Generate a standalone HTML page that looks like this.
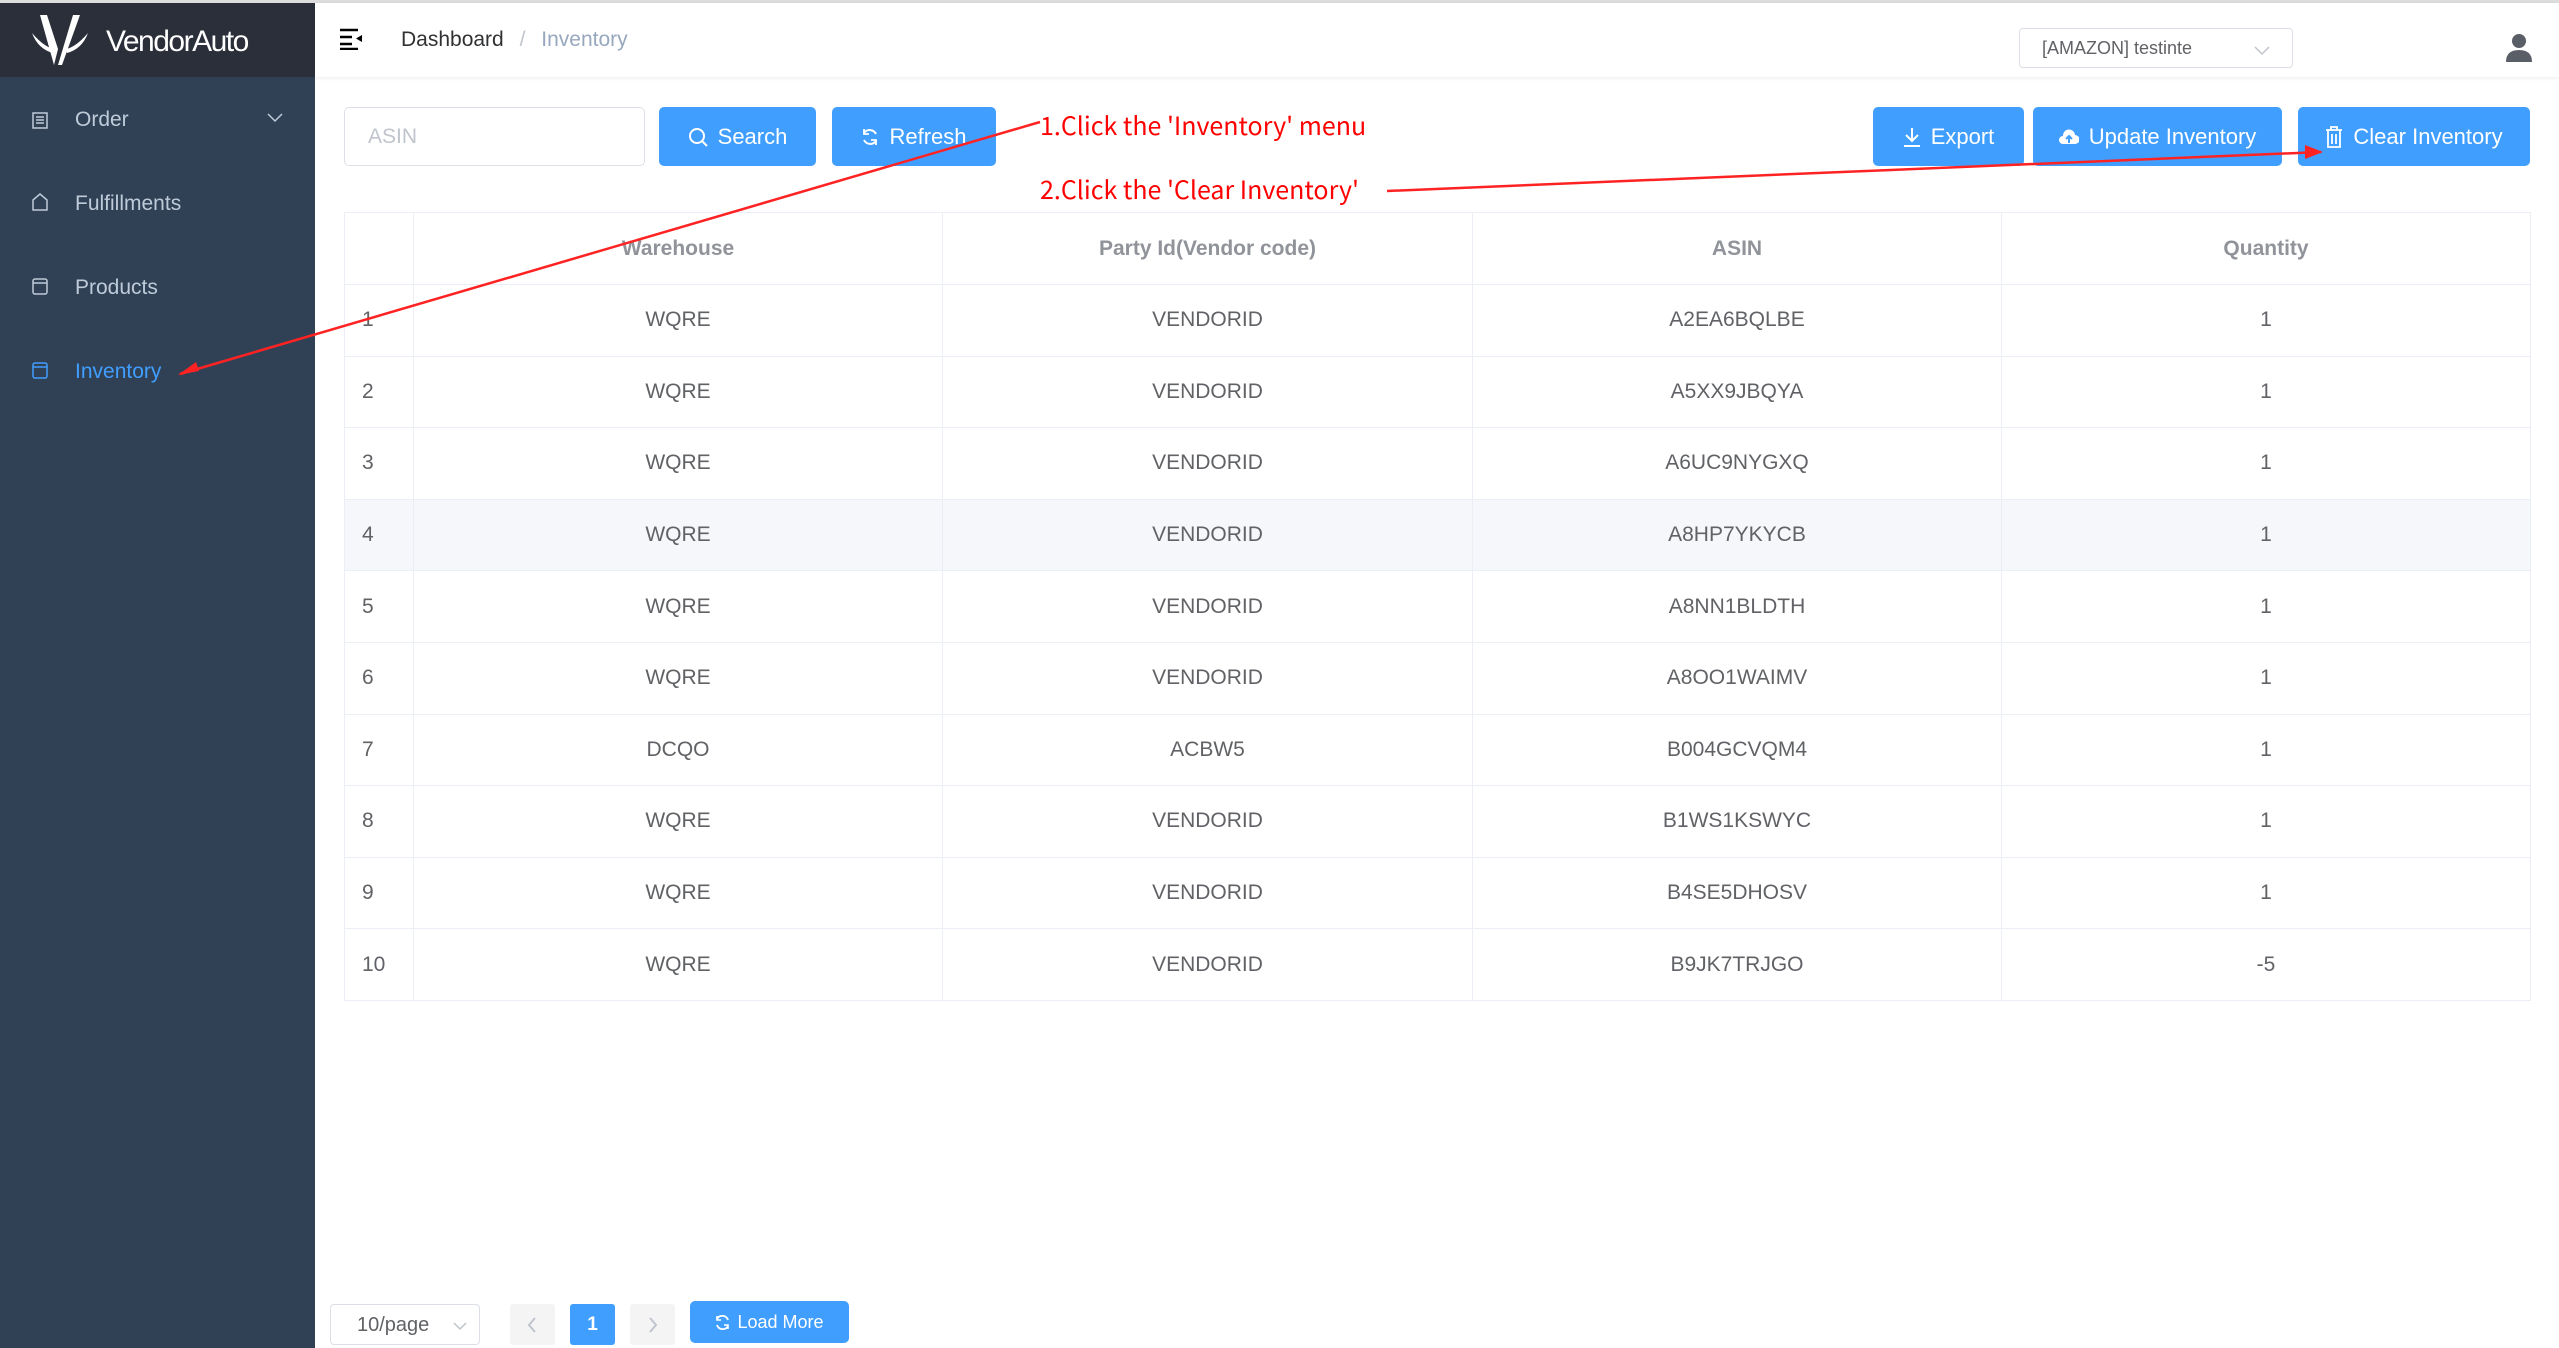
<!DOCTYPE html>
<html><head><meta charset="utf-8"><style>
*{box-sizing:border-box;margin:0;padding:0}
body{width:2559px;height:1348px;overflow:hidden;font-family:"Liberation Sans",sans-serif;background:#fff;position:relative}
.topline{position:absolute;left:0;top:0;width:2559px;height:3px;background:#ddd}
.logo{position:absolute;left:0;top:3px;width:315px;height:74px;background:#2b2f3a;color:#fff}
.side{position:absolute;left:0;top:77px;width:315px;height:1271px;background:#304156}
.mi{position:absolute;left:75px;font-size:21px;color:#bfcbd9}
.ic{position:absolute;left:31px;width:18px;height:18px}
.hdr{position:absolute;left:315px;top:3px;width:2244px;height:74px;background:#fff;box-shadow:0 1px 4px rgba(0,21,41,.08)}
.btn{position:absolute;top:107px;height:59px;background:#409eff;border-radius:5px;color:#fff;font-size:22px;display:flex;align-items:center;justify-content:center;gap:10px}
table{position:absolute;left:344px;top:212px;width:2186px;border-collapse:collapse;table-layout:fixed;font-size:21px;color:#606266;border-top:1px solid #ebeef5;border-left:1px solid #ebeef5}
td,th{border-bottom:1px solid #ebeef5;border-right:1px solid #ebeef5;text-align:center;height:71.6px}
th{color:#909399;font-weight:bold;height:72px}
tr td:first-child,tr th:first-child{text-align:left;padding-left:17px}
.ann{position:absolute;left:1040px;color:#f00;font-size:25px;font-family:"Noto Sans CJK SC",sans-serif}
</style></head><body>
<div class="topline"></div>
<div class="logo">
<svg style="position:absolute;left:30px;top:10px" width="60" height="56" viewBox="0 0 60 56"><path d="M10 2 L17 2 L28 36 L24 52 Z M43 2 L50 2 L32 52 L28 52 Z" fill="#fff"/><path d="M2 20 Q14 34 24 36 L23 40 Q8 36 2 20Z M58 20 Q46 34 36 36 L37 40 Q52 36 58 20Z" fill="#fff"/></svg>
<div style="position:absolute;left:106px;top:22px;font-size:30px;letter-spacing:-1.5px">VendorAuto</div></div>
<div class="side">
<svg class="ic" style="top:34px" viewBox="0 0 18 18"><rect x="2" y="2" width="14" height="15" fill="none" stroke="#bfcbd9" stroke-width="1.5"/><path d="M5 6h8M5 9h8M5 12h8" stroke="#bfcbd9" stroke-width="1.5"/></svg>
<div class="mi" style="top:31px">Order</div>
<svg style="position:absolute;left:267px;top:36px" width="16" height="10"><path d="M1 1 L8 8 L15 1" fill="none" stroke="#bfcbd9" stroke-width="1.5"/></svg>
<svg class="ic" style="top:116px" viewBox="0 0 18 18"><path d="M2 17V7L9 1L16 7V17Z" fill="none" stroke="#bfcbd9" stroke-width="1.5"/></svg>
<div class="mi" style="top:115px">Fulfillments</div>
<svg class="ic" style="top:200px" viewBox="0 0 18 18"><rect x="2" y="2" width="14" height="15" rx="2" fill="none" stroke="#bfcbd9" stroke-width="1.5"/><path d="M2 6h14" stroke="#bfcbd9" stroke-width="1.5"/></svg>
<div class="mi" style="top:199px">Products</div>
<svg class="ic" style="top:284px" viewBox="0 0 18 18"><rect x="2" y="2" width="14" height="15" rx="2" fill="none" stroke="#409eff" stroke-width="1.5"/><path d="M2 6h14" stroke="#409eff" stroke-width="1.5"/></svg>
<div class="mi" style="top:283px;color:#409eff">Inventory</div>
</div>
<div class="hdr">
<svg style="position:absolute;left:25px;top:25px" width="24" height="22"><path d="M0 2h18M0 9h12M0 16h12M0 21h18" stroke="#000" stroke-width="2.5"/><path d="M22 7 L16 10.5 L22 14Z" fill="#000"/></svg>
<div style="position:absolute;left:86px;top:25px;font-size:21px;color:#303133">Dashboard <span style="color:#c0c4cc;margin:0 10px">/</span> <span style="color:#97a8be">Inventory</span></div>
<div style="position:absolute;left:1704px;top:25px;width:274px;height:40px;border:1px solid #dcdfe6;border-radius:4px;font-size:18px;color:#606266;padding:9px 22px">[AMAZON] testinte
<svg style="position:absolute;right:22px;top:17px" width="16" height="10"><path d="M1 1 L8 8 L15 1" fill="none" stroke="#c0c4cc" stroke-width="1.5"/></svg></div>
<svg style="position:absolute;left:2190px;top:30px" width="28" height="30"><circle cx="14" cy="8" r="7" fill="#5a5e66"/><path d="M1 29 Q1 17 14 17 Q27 17 27 29Z" fill="#5a5e66"/></svg>
</div>
<div style="position:absolute;left:344px;top:107px;width:301px;height:59px;border:1px solid #dcdfe6;border-radius:5px;font-size:21px;color:#c0c4cc;padding:17px 23px">ASIN</div>
<div class="btn" style="left:659px;width:157px"><svg width="20" height="20"><circle cx="9" cy="9" r="7" fill="none" stroke="#fff" stroke-width="2"/><path d="M14 14l5 5" stroke="#fff" stroke-width="2"/></svg>Search</div>
<div class="btn" style="left:832px;width:164px"><svg width="18" height="18"><path d="M15 6A7 7 0 0 0 3 5M3 12A7 7 0 0 0 15 13" fill="none" stroke="#fff" stroke-width="2"/><path d="M3 1v5h5M15 17v-5h-5" fill="none" stroke="#fff" stroke-width="1.8"/></svg>Refresh</div>
<div class="btn" style="left:1873px;width:151px"><svg width="18" height="20"><path d="M9 1v13M3 8l6 6 6-6M1 19h16" fill="none" stroke="#fff" stroke-width="2"/></svg>Export</div>
<div class="btn" style="left:2033px;width:249px"><svg width="20" height="18"><path d="M4 16A4 4 0 0 1 4 8A6 6 0 0 1 16 7A4.5 4.5 0 0 1 16 16Z" fill="#fff"/><path d="M10 15V9M7 11l3-3 3 3" stroke="#409eff" stroke-width="2" fill="none"/></svg>Update Inventory</div>
<div class="btn" style="left:2298px;width:232px"><svg width="18" height="22"><path d="M1 4h16M6 4V1h6v3M3 4v17h12V4M7 8v10M11 8v10" fill="none" stroke="#fff" stroke-width="1.8"/></svg>Clear Inventory</div>
<table>
<colgroup><col style="width:69px"><col style="width:529px"><col style="width:530px"><col style="width:529px"><col style="width:529px"></colgroup>
<tr><th></th><th>Warehouse</th><th>Party Id(Vendor code)</th><th>ASIN</th><th>Quantity</th></tr>
<tr><td>1</td><td>WQRE</td><td>VENDORID</td><td>A2EA6BQLBE</td><td>1</td></tr>
<tr><td>2</td><td>WQRE</td><td>VENDORID</td><td>A5XX9JBQYA</td><td>1</td></tr>
<tr><td>3</td><td>WQRE</td><td>VENDORID</td><td>A6UC9NYGXQ</td><td>1</td></tr>
<tr style="background:#f5f7fa"><td>4</td><td>WQRE</td><td>VENDORID</td><td>A8HP7YKYCB</td><td>1</td></tr>
<tr><td>5</td><td>WQRE</td><td>VENDORID</td><td>A8NN1BLDTH</td><td>1</td></tr>
<tr><td>6</td><td>WQRE</td><td>VENDORID</td><td>A8OO1WAIMV</td><td>1</td></tr>
<tr><td>7</td><td>DCQO</td><td>ACBW5</td><td>B004GCVQM4</td><td>1</td></tr>
<tr><td>8</td><td>WQRE</td><td>VENDORID</td><td>B1WS1KSWYC</td><td>1</td></tr>
<tr><td>9</td><td>WQRE</td><td>VENDORID</td><td>B4SE5DHOSV</td><td>1</td></tr>
<tr><td>10</td><td>WQRE</td><td>VENDORID</td><td>B9JK7TRJGO</td><td>-5</td></tr>
</table>
<div class="ann" style="top:107px">1.Click the 'Inventory' menu</div>
<div class="ann" style="top:171px">2.Click the 'Clear Inventory'</div>
<svg style="position:absolute;left:0;top:0" width="2559" height="1348">
<path d="M1040 122 L180 374" stroke="#f22" stroke-width="2.5"/>
<path d="M178 375 L196 362 L199 371Z" fill="#f22"/>
<path d="M1387 191 L2321 152" stroke="#f22" stroke-width="2.5"/>
<path d="M2323 152 L2305 145 L2305 159Z" fill="#f22"/>
</svg>
<div style="position:absolute;left:330px;top:1304px;width:150px;height:41px;border:1px solid #dcdfe6;border-radius:4px;font-size:20px;color:#606266;padding:9px 26px">10/page<svg style="position:absolute;right:12px;top:17px" width="14" height="9"><path d="M1 1L7 7L13 1" fill="none" stroke="#c0c4cc" stroke-width="1.5"/></svg></div>
<div style="position:absolute;left:510px;top:1304px;width:45px;height:41px;background:#f4f4f5;border-radius:3px"><svg style="position:absolute;left:17px;top:13px" width="10" height="16"><path d="M8 1L2 8L8 15" fill="none" stroke="#c0c4cc" stroke-width="2"/></svg></div>
<div style="position:absolute;left:570px;top:1304px;width:45px;height:41px;background:#409eff;border-radius:3px;color:#fff;font-weight:bold;font-size:19px;text-align:center;line-height:41px">1</div>
<div style="position:absolute;left:630px;top:1304px;width:45px;height:41px;background:#f4f4f5;border-radius:3px"><svg style="position:absolute;left:18px;top:13px" width="10" height="16"><path d="M2 1L8 8L2 15" fill="none" stroke="#c0c4cc" stroke-width="2"/></svg></div>
<div class="btn" style="left:690px;top:1301px;width:159px;height:42px;font-size:18px;gap:7px"><svg width="15" height="15"><path d="M13 5A6 6 0 0 0 2 4M2 10A6 6 0 0 0 13 11" fill="none" stroke="#fff" stroke-width="1.8"/><path d="M2 1v4h4M13 14v-4h-4" fill="none" stroke="#fff" stroke-width="1.6"/></svg>Load More</div>
</body></html>
